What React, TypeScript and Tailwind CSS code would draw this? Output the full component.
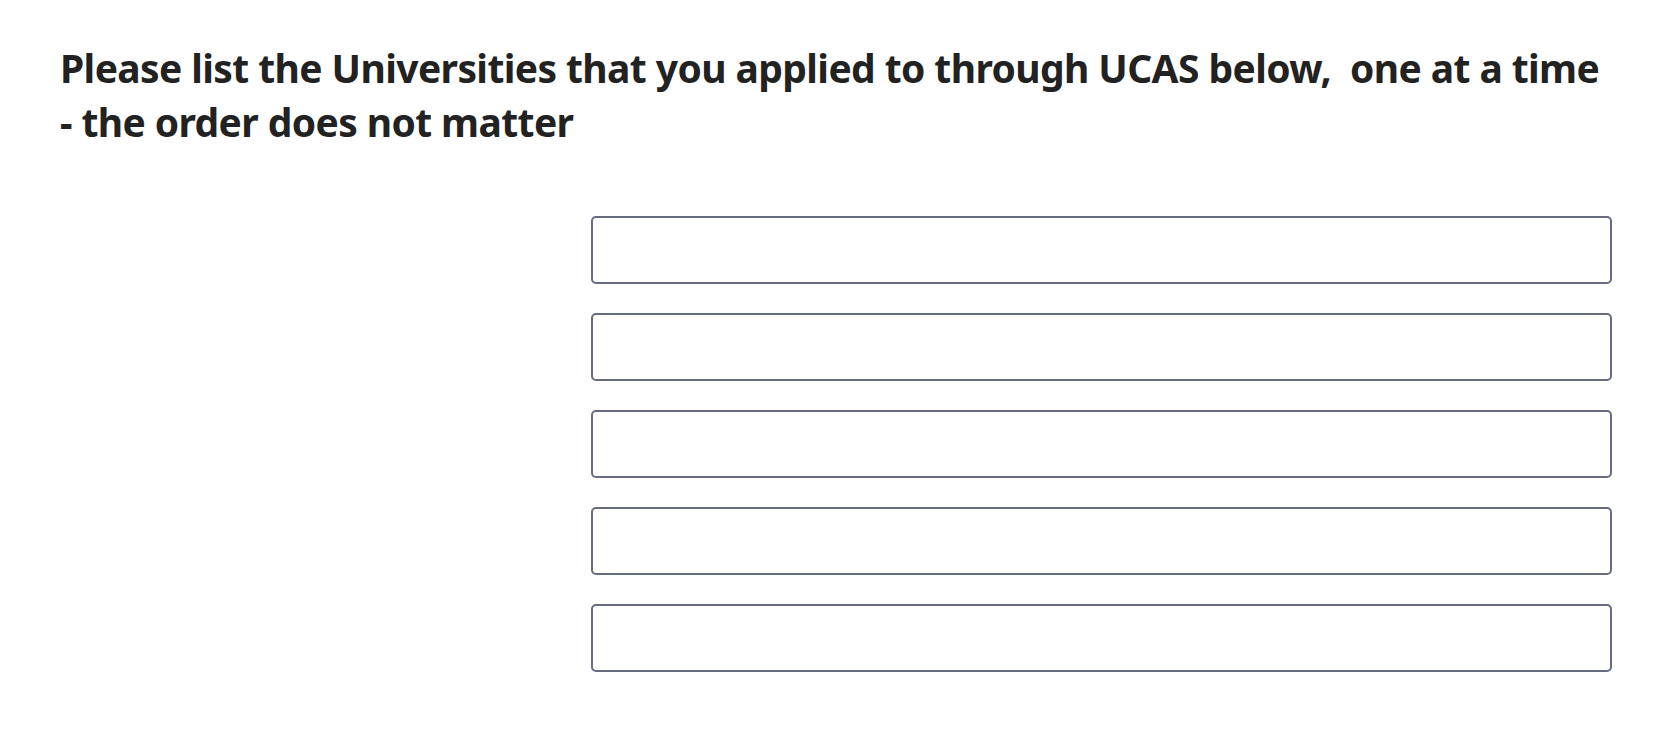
const fields = [0, 1, 2, 3, 4];

const App = () => {
  return (
    <div className="min-h-screen bg-white pt-[41px] pl-[60px] pr-[48px] font-['Noto_Sans',sans-serif]">
      <h2 className="text-[39px] leading-[54px] font-bold text-[#222222] tracking-[-0.6px] whitespace-nowrap">
        Please list the Universities that you applied to through UCAS below,&nbsp; one at a time
        <br />- the order does not matter
      </h2>
      <div className="flex mt-[67px]">
        <div className="w-[531px] shrink-0" />
        <div className="flex flex-col gap-[29px] flex-1">
          {fields.map((i) => (
            <input
              key={i}
              type="text"
              className="h-[68px] w-full rounded-[5px] border-2 border-[#686c83] bg-white px-4 text-lg outline-none"
            />
          ))}
        </div>
      </div>
    </div>
  );
};

export default App;
